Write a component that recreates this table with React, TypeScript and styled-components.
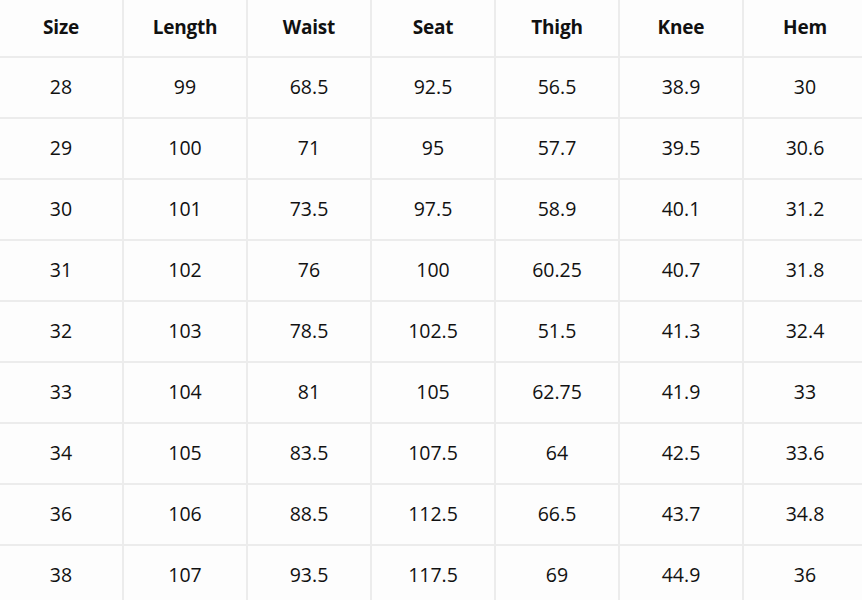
import React from "react";
import styled, { createGlobalStyle } from "styled-components";

const Global = createGlobalStyle`
  html, body { margin: 0; padding: 0; background: #fdfdfd; }
  body { font-family: "Open Sans", "Noto Sans", sans-serif; color: #111; overflow: hidden; }
`;

const Wrap = styled.div`
  width: 862px;
  height: 600px;
  overflow: hidden;
  background: #fdfdfd;
`;

const Grid = styled.div`
  display: grid;
  grid-template-columns: repeat(7, 124px);
  width: 868px;
`;

const Cell = styled.div<{ $head?: boolean }>`
  box-sizing: border-box;
  height: ${(p) => (p.$head ? 58 : 61)}px;
  padding-bottom: ${(p) => (p.$head ? 3 : 2)}px;
  border-right: 2px solid #ececec;
  border-bottom: 2px solid #ececec;
  display: flex;
  align-items: center;
  justify-content: center;
  font-size: ${(p) => (p.$head ? 19 : 19.5)}px;
  font-weight: ${(p) => (p.$head ? 700 : 400)};
  color: #111;
  letter-spacing: ${(p) => (p.$head ? "-0.2px" : "0")};
`;

const headers = ["Size", "Length", "Waist", "Seat", "Thigh", "Knee", "Hem"];
const rows = [
  ["28", "99", "68.5", "92.5", "56.5", "38.9", "30"],
  ["29", "100", "71", "95", "57.7", "39.5", "30.6"],
  ["30", "101", "73.5", "97.5", "58.9", "40.1", "31.2"],
  ["31", "102", "76", "100", "60.25", "40.7", "31.8"],
  ["32", "103", "78.5", "102.5", "51.5", "41.3", "32.4"],
  ["33", "104", "81", "105", "62.75", "41.9", "33"],
  ["34", "105", "83.5", "107.5", "64", "42.5", "33.6"],
  ["36", "106", "88.5", "112.5", "66.5", "43.7", "34.8"],
  ["38", "107", "93.5", "117.5", "69", "44.9", "36"],
];

export default function App() {
  return (
    <Wrap>
      <Global />
      <Grid>
        {headers.map((h) => (
          <Cell key={h} $head>
            {h}
          </Cell>
        ))}
        {rows.map((r, i) =>
          r.map((v, j) => <Cell key={`${i}-${j}`}>{v}</Cell>)
        )}
      </Grid>
    </Wrap>
  );
}
